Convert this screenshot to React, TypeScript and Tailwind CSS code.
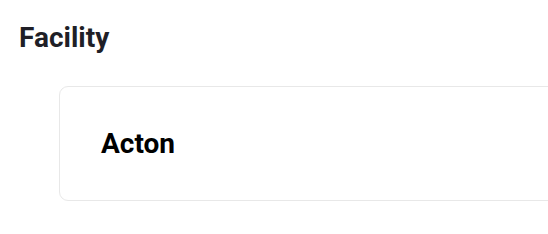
export default function App() {
  return (
    <div className="w-[548px] h-[234px] overflow-hidden bg-white" style={{ fontFamily: 'Roboto, "Liberation Sans", sans-serif' }}>
      <div className="pl-[19px] pt-[22px]">
        <h2 className="text-[28px] leading-[32px] font-bold text-[#1f1f27]">Facility</h2>
      </div>
      <div className="pl-[59px] pt-[32px]">
        <div className="w-[520px] h-[115px] border border-[#e8e8e8] rounded-[9px] flex items-center pl-[41px]">
          <span className="text-[28px] leading-[32px] font-bold text-black">Acton</span>
        </div>
      </div>
    </div>
  );
}
